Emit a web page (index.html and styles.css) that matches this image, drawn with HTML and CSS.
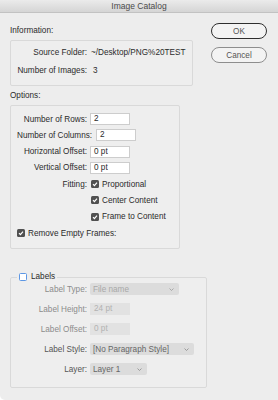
FILE: index.html
```html
<!DOCTYPE html>
<html>
<head>
    <title>Image Catalog</title>
    <link rel="stylesheet" href="styles.css">
</head>
<body>
    <div class="window">
        <div class="title-bar">Image Catalog</div>

        <div class="dialog">
            <div class="main">
                <h2 class="section-title info-title">Information:</h2>
                <div class="group info-group">
                    <div class="info-row">
                        <span class="row-label">Source Folder:</span>
                        <span class="info-value">~/Desktop/PNG%20TEST</span>
                    </div>
                    <div class="info-row">
                        <span class="row-label">Number of Images:</span>
                        <span class="info-value count">3</span>
                    </div>
                </div>

                <h2 class="section-title options-title">Options:</h2>
                <div class="group options-group">
                    <div class="row">
                        <span class="row-label">Number of Rows:</span>
                        <span class="field">2</span>
                    </div>
                    <div class="row">
                        <span class="row-label wide">Number of Columns:</span>
                        <span class="field">2</span>
                    </div>
                    <div class="row">
                        <span class="row-label">Horizontal Offset:</span>
                        <span class="field">0 pt</span>
                    </div>
                    <div class="row">
                        <span class="row-label">Vertical Offset:</span>
                        <span class="field">0 pt</span>
                    </div>
                    <div class="row">
                        <span class="row-label">Fitting:</span>
                        <span class="check-item">
                            <svg class="check" width="8" height="8" viewBox="0 0 8 8"><rect width="8" height="8" rx="1.5" fill="#505050"/><path d="M2 4.2 L3.4 5.6 L6 2.6" fill="none" stroke="#fff" stroke-width="1.2"/></svg>
                            Proportional
                        </span>
                    </div>
                    <div class="row">
                        <span class="row-label"></span>
                        <span class="check-item">
                            <svg class="check" width="8" height="8" viewBox="0 0 8 8"><rect width="8" height="8" rx="1.5" fill="#505050"/><path d="M2 4.2 L3.4 5.6 L6 2.6" fill="none" stroke="#fff" stroke-width="1.2"/></svg>
                            Center Content
                        </span>
                    </div>
                    <div class="row">
                        <span class="row-label"></span>
                        <span class="check-item">
                            <svg class="check" width="8" height="8" viewBox="0 0 8 8"><rect width="8" height="8" rx="1.5" fill="#505050"/><path d="M2 4.2 L3.4 5.6 L6 2.6" fill="none" stroke="#fff" stroke-width="1.2"/></svg>
                            Frame to Content
                        </span>
                    </div>
                    <div class="row">
                        <span class="check-item remove-empty">
                            <svg class="check" width="8" height="8" viewBox="0 0 8 8"><rect width="8" height="8" rx="1.5" fill="#505050"/><path d="M2 4.2 L3.4 5.6 L6 2.6" fill="none" stroke="#fff" stroke-width="1.2"/></svg>
                            Remove Empty Frames:
                        </span>
                    </div>
                </div>

                <fieldset class="group labels-group">
                    <legend class="labels-legend">
                        <span class="empty-check"></span>
                        Labels
                    </legend>
                    <div class="row">
                        <span class="row-label disabled">Label Type:</span>
                        <span class="select disabled type-select">File name
                            <svg width="5" height="3" viewBox="0 0 5 3"><path d="M0.5 0.5 L2.5 2.5 L4.5 0.5" fill="none" stroke="#9a9a9a" stroke-width="0.8"/></svg>
                        </span>
                    </div>
                    <div class="row">
                        <span class="row-label disabled">Label Height:</span>
                        <span class="field off">24 pt</span>
                    </div>
                    <div class="row">
                        <span class="row-label disabled">Label Offset:</span>
                        <span class="field off">0 pt</span>
                    </div>
                    <div class="row">
                        <span class="row-label soft">Label Style:</span>
                        <span class="select style-select">[No Paragraph Style]
                            <svg width="5" height="3" viewBox="0 0 5 3"><path d="M0.5 0.5 L2.5 2.5 L4.5 0.5" fill="none" stroke="#8a8a8a" stroke-width="0.8"/></svg>
                        </span>
                    </div>
                    <div class="row">
                        <span class="row-label soft">Layer:</span>
                        <span class="select layer-select">Layer 1
                            <svg width="5" height="3" viewBox="0 0 5 3"><path d="M0.5 0.5 L2.5 2.5 L4.5 0.5" fill="none" stroke="#8a8a8a" stroke-width="0.8"/></svg>
                        </span>
                    </div>
                </fieldset>
            </div>

            <div class="buttons">
                <button class="btn default">OK</button>
                <button class="btn">Cancel</button>
            </div>
        </div>
    </div>
</body>
</html>
```

FILE: styles.css
```css
/* Reset and base styles */
* {
    margin: 0;
    padding: 0;
    box-sizing: border-box;
}

body {
    background: #fff;
    font-family: "Liberation Sans", Arial, sans-serif;
    font-size: 8.2px;
    color: #2b2b2b;
}

.window {
    width: 278px;
    height: 400px;
    background: #ededed;
    border-bottom-left-radius: 5px;
    overflow: hidden;
}

.title-bar {
    height: 13px;
    line-height: 12px;
    text-align: center;
    font-size: 8.5px;
    color: #4a4a4a;
    background: linear-gradient(#ebebeb, #d5d5d5);
    border-bottom: 1px solid #c2c2c2;
}

/* Layout */
.dialog {
    display: flex;
}

.main {
    width: 207px;
    padding-left: 10px;
}

.section-title {
    font-size: 8.2px;
    font-weight: normal;
    line-height: 10px;
}

.info-title {
    margin-top: 13px;
    margin-bottom: 4px;
}

.options-title {
    margin-top: 5px;
    margin-bottom: 4px;
}

.group {
    border: 1px solid #d9d9d9;
    border-radius: 2px;
    background: #eeeeee;
}

/* Information */
.info-group {
    width: 183px;
    height: 46px;
    padding-top: 7px;
    display: flex;
    flex-direction: column;
    gap: 8px;
}

.info-row {
    display: flex;
    line-height: 10px;
}

.row-label {
    width: 76px;
    flex: none;
    text-align: right;
    white-space: nowrap;
}

.row-label.wide {
    width: auto;
    padding-left: 6px;
}

.info-value {
    margin-left: 4px;
    white-space: nowrap;
}

.info-value.count {
    margin-left: 6px;
}

/* Options */
.options-group {
    width: 170px;
    height: 144px;
    padding-top: 7px;
    display: flex;
    flex-direction: column;
    gap: 4.3px;
}

.row {
    display: flex;
    align-items: center;
    height: 12px;
    gap: 3px;
    white-space: nowrap;
}

.field {
    width: 40px;
    height: 12px;
    line-height: 10px;
    padding-left: 3px;
    background: #fff;
    border: 1px solid #cdcdcd;
}

.row-label.wide + .field {
    margin-left: 1px;
}

.check-item {
    display: flex;
    align-items: center;
    gap: 3px;
    margin-left: 1px;
}

.remove-empty {
    margin-left: 6px;
}

.check {
    flex: none;
}

/* Labels */
.labels-group {
    width: 197px;
    margin-top: 23px;
    padding: 1px 0 12px;
    display: flex;
    flex-direction: column;
    gap: 8px;
}

.labels-legend {
    display: flex;
    align-items: center;
    gap: 4px;
    margin-left: 6px;
    padding: 0 2px;
    line-height: 10px;
}

.empty-check {
    width: 8px;
    height: 8px;
    background: #fff;
    border: 1px solid #5d97e4;
    border-radius: 1.5px;
}

.row-label.disabled {
    color: #8c8c8c;
}

.row-label.soft {
    color: #555;
}

.field.off {
    background: #e2e2e2;
    border-color: #e2e2e2;
    color: #b2b2b2;
}

.select {
    height: 12px;
    display: flex;
    align-items: center;
    justify-content: space-between;
    padding: 0 5px 0 3px;
    background: #dcdcdc;
    border-radius: 2px;
    color: #666;
}

.select.disabled {
    color: #a8a8a8;
}

.type-select {
    width: 89px;
}

.style-select {
    width: 104px;
}

.layer-select {
    width: 57px;
}

/* Buttons */
.buttons {
    margin-left: 4px;
    padding-top: 10px;
    display: flex;
    flex-direction: column;
    gap: 8px;
}

.btn {
    width: 56px;
    height: 16px;
    border-radius: 8px;
    border: 1px solid #8e8e8e;
    background: #f3f3f3;
    font-family: inherit;
    font-size: 8.2px;
    color: #555;
}

.btn.default {
    border-color: #2e2e2e;
}
```
